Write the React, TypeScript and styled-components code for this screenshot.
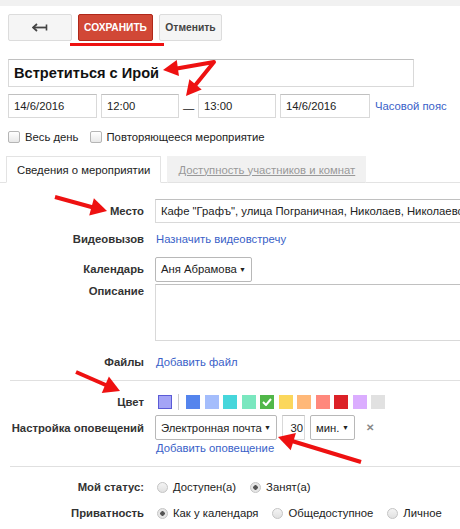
import React from 'react'
import styled, { createGlobalStyle } from 'styled-components'

const GlobalStyle = createGlobalStyle`
  body {
    margin: 0;
    background: #fff;
    font-family: "Liberation Sans", Arial, sans-serif;
    font-size: 11.3px;
    color: #222;
  }
`

type Pt = [number, number]

const arrowHead = (from: Pt, tip: Pt, len = 15, half = 8) => {
    const dx = tip[0] - from[0]
    const dy = tip[1] - from[1]
    const l = Math.sqrt(dx * dx + dy * dy)
    const ux = dx / l
    const uy = dy / l
    const bx = tip[0] - ux * len
    const by = tip[1] - uy * len
    const px = -uy * half
    const py = ux * half
    return `${tip[0]},${tip[1]} ${bx + px},${by + py} ${bx - px},${by - py}`
}

const swatches = ['#5484ed', '#a4bdfc', '#46d6db', '#7ae7bf', '#51b749', '#fbd75b', '#ffb878', '#ff887c', '#dc2127', '#dbadff', '#e1e1e1']

const App = () => {
    return (
        <Page>
            <GlobalStyle />
            <TopBand />
            <Toolbar>
                <GrayButton $w={64}>
                    <svg width="16" height="9" viewBox="0 0 16 9">
                        <path d="M5 1 L1 4.5 L5 8" fill="none" stroke="#444" strokeWidth="1.8" />
                        <path d="M1.5 4.5 H14" stroke="#444" strokeWidth="1.8" />
                        <path d="M14.5 1.5 V7.5" stroke="#444" strokeWidth="1.6" />
                    </svg>
                </GrayButton>
                <SaveWrap>
                    <SaveButton>СОХРАНИТЬ</SaveButton>
                    <Underline />
                </SaveWrap>
                <GrayButton $w={63}>Отменить</GrayButton>
            </Toolbar>

            <TitleInput>Встретиться с Ирой</TitleInput>

            <DateRow>
                <TextBox $w={89}>14/6/2016</TextBox>
                <TextBox $w={78}>12:00</TextBox>
                <Dash>—</Dash>
                <TextBox $w={78}>13:00</TextBox>
                <TextBox $w={90}>14/6/2016</TextBox>
                <Link>Часовой пояс</Link>
            </DateRow>

            <CheckRow>
                <CheckItem><Check />Весь день</CheckItem>
                <CheckItem><Check />Повторяющееся мероприятие</CheckItem>
            </CheckRow>

            <Tabs>
                <Tab $active>Сведения о мероприятии</Tab>
                <Tab>Доступность участников и комнат</Tab>
            </Tabs>

            <Form>
                <Row $top={16} $h={24}>
                    <Label>Место</Label>
                    <TextBox $w={310}>Кафе "Графъ", улица Пограничная, Николаев, Николаевская</TextBox>
                </Row>
                <Row $top={4} $h={24}>
                    <Label>Видеовызов</Label>
                    <Link>Назначить видеовстречу</Link>
                </Row>
                <Row $top={5} $h={26}>
                    <Label>Календарь</Label>
                    <Select $w={97}>Аня Абрамова <Caret>▼</Caret></Select>
                </Row>
                <Row $top={2} $h={57} $start>
                    <Label $pad={1}>Описание</Label>
                    <TextArea />
                </Row>
                <Row $top={9} $h={24}>
                    <Label>Файлы</Label>
                    <Link>Добавить файл</Link>
                </Row>
                <Divider $top={6} />
                <Row $top={12} $h={18}>
                    <Label>Цвет</Label>
                    <Swatches>
                        <Swatch $c="#a4a4f6" $border="#5b5bd6" />
                        <Sep />
                        {swatches.map((c, i) => (
                            <Swatch key={i} $c={c}>
                                {i === 4 && (
                                    <svg width="10" height="8" viewBox="0 0 10 8">
                                        <path d="M1 4 L4 7 L9 1" fill="none" stroke="#fff" strokeWidth="2" />
                                    </svg>
                                )}
                            </Swatch>
                        ))}
                    </Swatches>
                </Row>
                <Row $top={4} $h={25}>
                    <Label>Настройка оповещений</Label>
                    <Notify>
                        <Select $w={122}>Электронная почта <Caret>▼</Caret></Select>
                        <NumBox>30</NumBox>
                        <Select $w={45}>мин. <Caret>▼</Caret></Select>
                        <Close>✕</Close>
                    </Notify>
                </Row>
                <Row $top={0} $h={15}>
                    <Label />
                    <Link>Добавить оповещение</Link>
                </Row>
                <Divider $top={11} />
                <Row $top={10} $h={20}>
                    <Label>Мой статус:</Label>
                    <Radios>
                        <RadioItem><Radio />Доступен(а)</RadioItem>
                        <RadioItem><Radio $on />Занят(а)</RadioItem>
                    </Radios>
                </Row>
                <Row $top={6} $h={20}>
                    <Label>Приватность</Label>
                    <Radios>
                        <RadioItem><Radio $on />Как у календаря</RadioItem>
                        <RadioItem><Radio />Общедоступное</RadioItem>
                        <RadioItem><Radio />Личное</RadioItem>
                    </Radios>
                </Row>
            </Form>

            <Marks width="460" height="529" viewBox="0 0 460 529">
                <g stroke="#ee1111" strokeWidth="4" fill="none" strokeLinejoin="round">
                    <polyline points="174,69 214,62 193,88" />
                    <line x1="55" y1="197" x2="95" y2="208" />
                    <line x1="76" y1="372" x2="108" y2="386" />
                    <line x1="361" y1="462" x2="292" y2="441" />
                </g>
                <g fill="#ee1111">
                    <polygon points={arrowHead([214, 63], [163, 70], 15, 8)} />
                    <polygon points={arrowHead([214, 62], [186, 96], 15, 8)} />
                    <polygon points={arrowHead([55, 197], [107, 211], 16, 9)} />
                    <polygon points={arrowHead([76, 372], [120, 391], 16, 9)} />
                    <polygon points={arrowHead([361, 462], [278, 437], 16, 9)} />
                </g>
            </Marks>
        </Page>
    )
}

export default App

const Page = styled.div`
    position: relative;
    width: 460px;
    height: 529px;
    overflow: hidden;
    background: #fff;
`

const TopBand = styled.div`
    height: 6px;
    background: #f1f1f1;
`

const Toolbar = styled.div`
    display: flex;
    gap: 6px;
    padding: 8px 0 0 8px;
`

const GrayButton = styled.div<{ $w: number }>`
    box-sizing: border-box;
    width: ${p => p.$w}px;
    height: 27px;
    display: flex;
    align-items: center;
    justify-content: center;
    background: #f5f5f5;
    border: 1px solid #dcdcdc;
    border-radius: 2px;
    font-size: 10.3px;
    font-weight: bold;
    color: #444;
`

const SaveWrap = styled.div`
    position: relative;
`

const SaveButton = styled.div`
    box-sizing: border-box;
    width: 75px;
    height: 27px;
    display: flex;
    align-items: center;
    justify-content: center;
    background: #d14836;
    border: 1px solid #b0281a;
    border-radius: 2px;
    color: #fff;
    font-size: 10.2px;
    font-weight: bold;
`

const Underline = styled.div`
    position: absolute;
    left: -8px;
    top: 29px;
    width: 94px;
    height: 3px;
    background: #ee1111;
`

const TitleInput = styled.div`
    box-sizing: border-box;
    margin: 18px 0 0 8px;
    width: 406px;
    height: 28px;
    border: 1px solid #d9d9d9;
    border-top-color: #c0c0c0;
    padding: 0 5px;
    display: flex;
    align-items: center;
    font-size: 14.6px;
    font-weight: bold;
    color: #111;
`

const DateRow = styled.div`
    display: flex;
    align-items: center;
    gap: 4px;
    margin: 7px 0 0 8px;
`

const TextBox = styled.div<{ $w: number }>`
    box-sizing: border-box;
    width: ${p => p.$w}px;
    height: 24px;
    flex-shrink: 0;
    border: 1px solid #d9d9d9;
    border-top-color: #c0c0c0;
    padding: 0 5px;
    display: flex;
    align-items: center;
    white-space: nowrap;
    overflow: hidden;
    font-size: 11.3px;
    color: #222;
`

const Dash = styled.span`
    width: 11px;
    padding-top: 3px;
    font-size: 11.3px;
    color: #222;
`

const Link = styled.span`
    color: #3a5fc8;
    font-size: 11.3px;
    margin-left: 1px;
    white-space: nowrap;
`

const CheckRow = styled.div`
    display: flex;
    gap: 11px;
    margin: 13px 0 0 8px;
`

const CheckItem = styled.label`
    display: flex;
    align-items: center;
    gap: 5px;
    font-size: 11.3px;
    color: #222;
`

const Check = styled.span`
    box-sizing: border-box;
    width: 12px;
    height: 12px;
    border: 1px solid #b5b5b5;
    border-radius: 2px;
    background: linear-gradient(#fff, #e8e8e8);
`

const Tabs = styled.div`
    display: flex;
    gap: 6px;
    margin-top: 13px;
    padding-left: 6px;
    border-bottom: 1px solid #e3e3e3;
    height: 26px;
`

const Tab = styled.div<{ $active?: boolean }>`
    box-sizing: border-box;
    height: 27px;
    padding: 0 10px;
    display: flex;
    align-items: center;
    font-size: 11.3px;
    white-space: nowrap;
    color: ${p => (p.$active ? '#222' : '#999')};
    text-decoration: ${p => (p.$active ? 'none' : 'underline')};
    background: ${p => (p.$active ? '#fff' : '#f1f1f1')};
    border: ${p => (p.$active ? '1px solid #e3e3e3' : '1px solid #f1f1f1')};
    border-bottom: ${p => (p.$active ? '1px solid #fff' : '1px solid #e3e3e3')};
`

const Form = styled.div`
    display: flex;
    flex-direction: column;
`

const Row = styled.div<{ $top: number; $h: number; $start?: boolean }>`
    display: grid;
    grid-template-columns: 144px 1fr;
    column-gap: 11px;
    align-items: ${p => (p.$start ? 'start' : 'center')};
    margin-top: ${p => p.$top}px;
    height: ${p => p.$h}px;
`

const Label = styled.span<{ $pad?: number }>`
    text-align: right;
    font-weight: bold;
    font-size: 11.3px;
    color: #333;
    white-space: nowrap;
    padding-top: ${p => p.$pad || 0}px;
`

const Select = styled.div<{ $w: number }>`
    box-sizing: border-box;
    width: ${p => p.$w}px;
    height: 25px;
    border: 1px solid #b8b8b8;
    border-radius: 2px;
    background: #fff;
    padding: 0 5px;
    display: flex;
    align-items: center;
    justify-content: space-between;
    white-space: nowrap;
    font-size: 11.3px;
    color: #222;
`

const Caret = styled.span`
    font-size: 7px;
    color: #222;
`

const TextArea = styled.div`
    box-sizing: border-box;
    width: 310px;
    height: 57px;
    border: 1px solid #d9d9d9;
    border-top-color: #c0c0c0;
`

const Divider = styled.div<{ $top: number }>`
    margin: ${p => p.$top}px 0 0 10px;
    height: 1px;
    background: #e0e0e0;
`

const Swatches = styled.div`
    display: flex;
    align-items: center;
    gap: 4.5px;
    padding-left: 3px;
`

const Swatch = styled.span<{ $c: string; $border?: string }>`
    box-sizing: border-box;
    width: 14px;
    height: 14px;
    background: ${p => p.$c};
    border: 1px solid ${p => p.$border || p.$c};
    display: flex;
    align-items: center;
    justify-content: center;
`

const Sep = styled.span`
    width: 1px;
    height: 16px;
    background: #ccc;
    margin: 0 3px 0 1px;
`

const Notify = styled.div`
    display: flex;
    align-items: center;
    gap: 5px;
`

const NumBox = styled.div`
    box-sizing: border-box;
    width: 23px;
    height: 25px;
    border: 1px solid #d9d9d9;
    border-top-color: #c0c0c0;
    display: flex;
    align-items: center;
    justify-content: flex-end;
    padding-right: 1px;
    font-size: 11.3px;
`

const Close = styled.span`
    margin-left: 6px;
    color: #888;
    font-size: 10px;
    font-weight: bold;
`

const Radios = styled.div`
    display: flex;
    gap: 14px;
    padding-left: 2px;
`

const RadioItem = styled.label`
    display: flex;
    align-items: center;
    gap: 5px;
    font-size: 11.3px;
    color: #222;
`

const Radio = styled.span<{ $on?: boolean }>`
    box-sizing: border-box;
    width: 11px;
    height: 11px;
    border-radius: 50%;
    border: 1px solid #c4c4c4;
    background: ${p => (p.$on ? 'radial-gradient(circle, #555 0 2px, #e6e6e6 2.5px)' : 'linear-gradient(#f4f4f4, #e1e1e1)')};
`

const Marks = styled.svg`
    position: absolute;
    left: 0;
    top: 0;
    pointer-events: none;
`
